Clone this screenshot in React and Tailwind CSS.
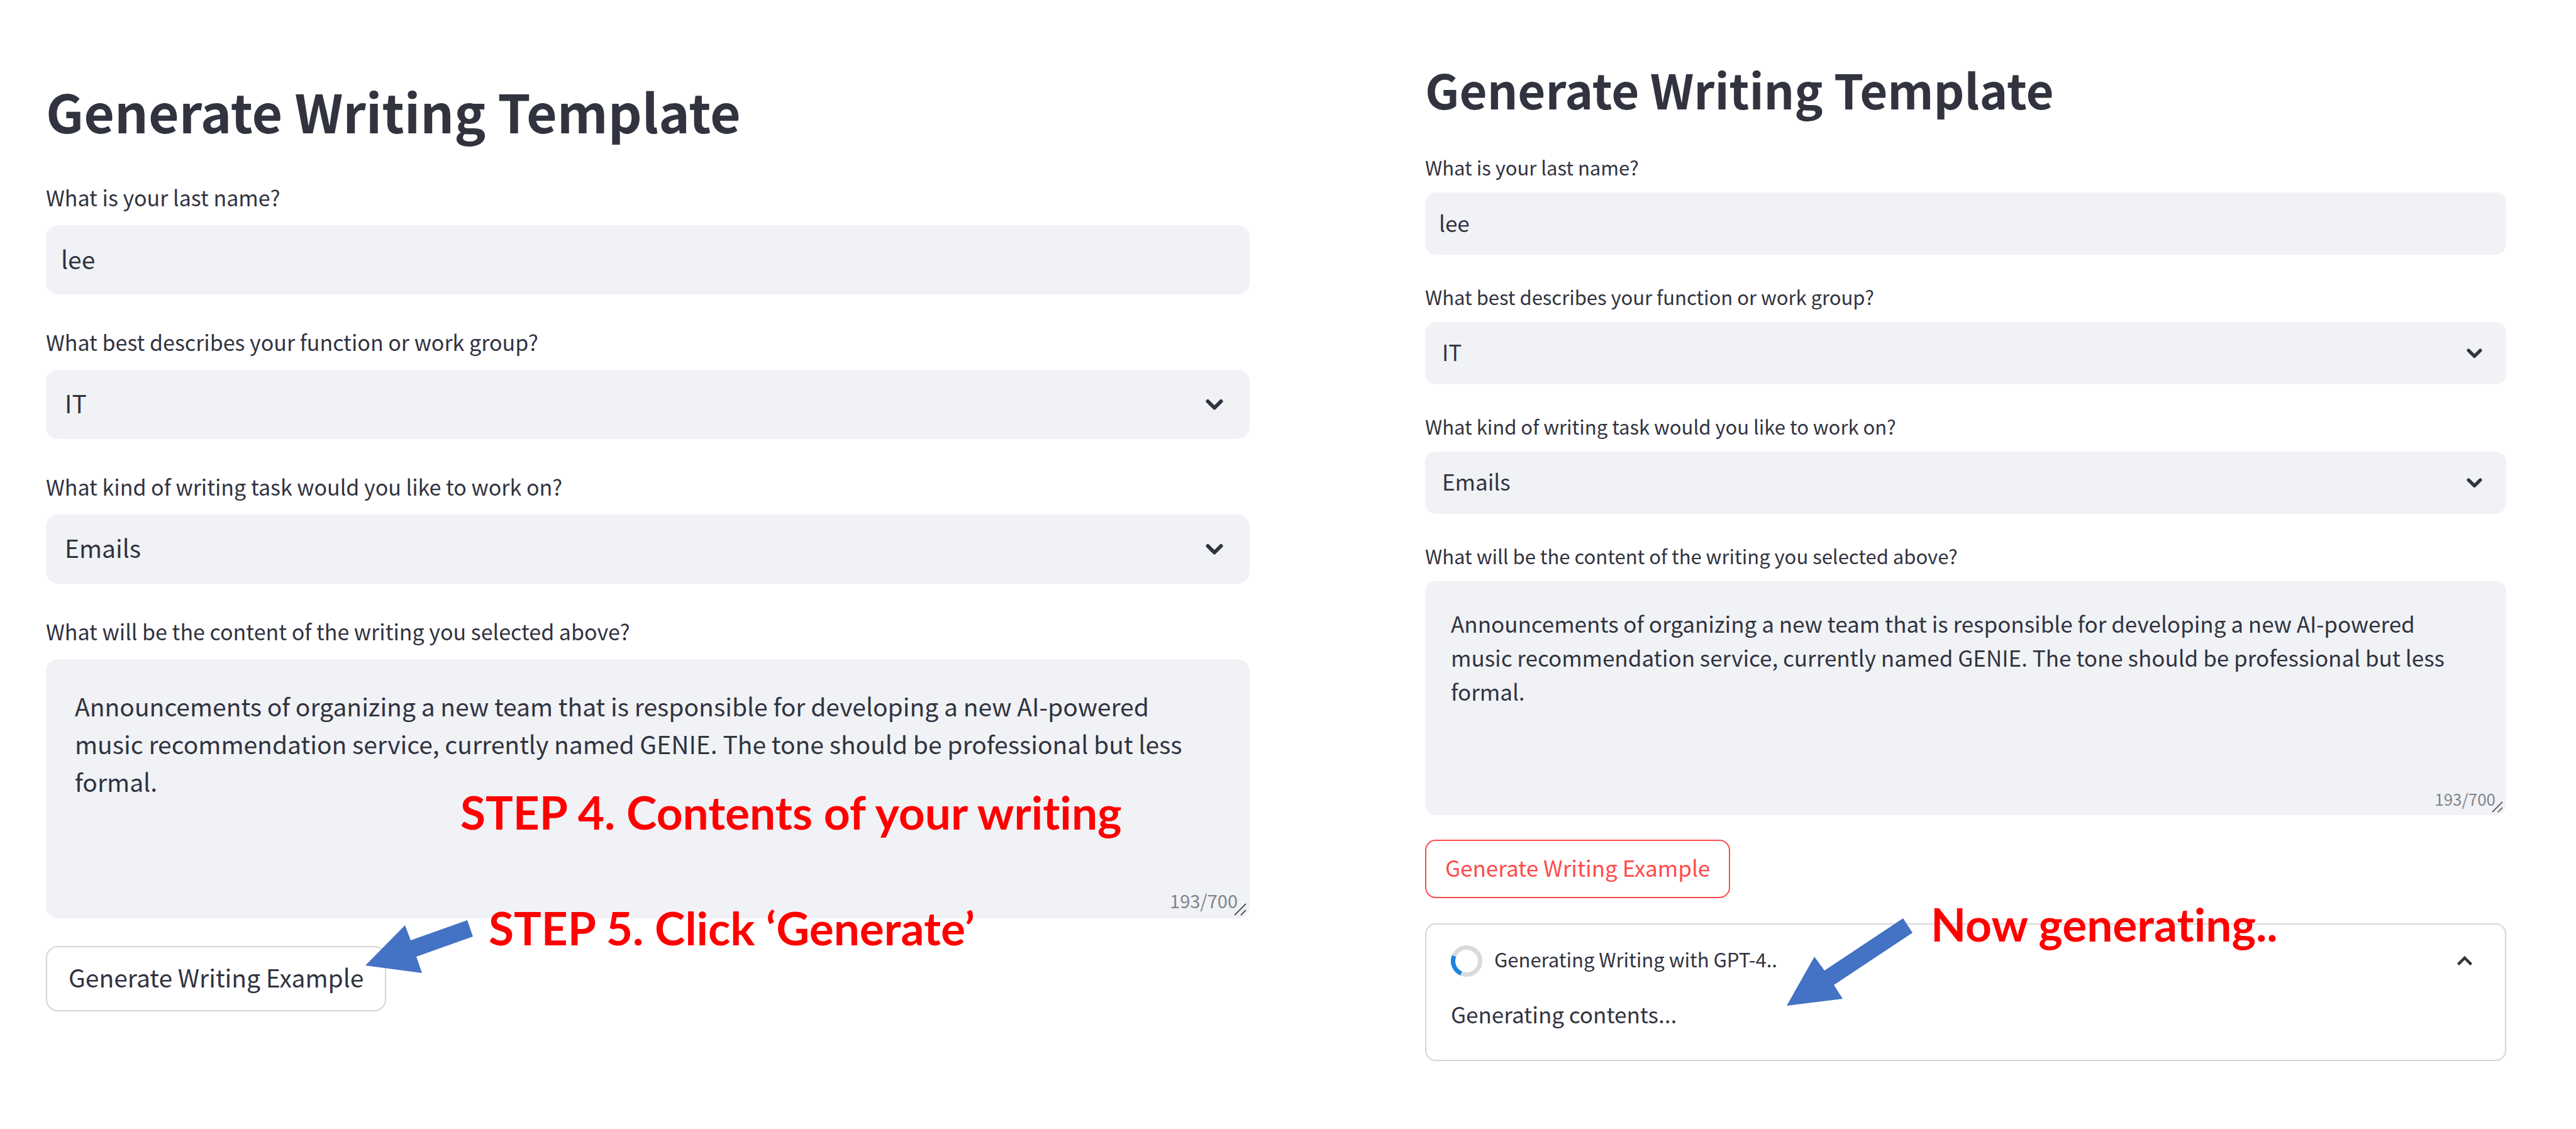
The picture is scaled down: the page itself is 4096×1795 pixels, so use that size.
import React, { useId } from "react";

const CONTENT =
  "Announcements of organizing a new team that is responsible for developing a new AI-powered music recommendation service, currently named GENIE. The tone should be professional but less formal.";

const large = {
  panel: "pt-[116px]",
  title: "text-[84px] leading-[120px] mb-[56px]",
  fields: "gap-[54px]",
  label: "text-[34px] leading-[44px] mb-[22px]",
  box: "h-[110px] pb-[5px] text-[39px] rounded-[19px]",
  input: "px-[24px]",
  select: "px-[30px]",
  chevron: "right-[42px] size-[28px]",
  textarea: "h-[412px] text-[39px] leading-[60px] rounded-[19px] pt-[44px] pl-[46px] pr-[64px]",
  counter: "text-[29px] right-[19px] bottom-[14px]",
  grip: "right-[5px] bottom-[4px] size-[20px]",
  button: "mt-[44px] h-[104px] px-[34px] pb-[6px] text-[39px] rounded-[19px] border-[#d6d6d9] text-[#31333f]",
};

const small = {
  panel: "pt-[87px]",
  title: "text-[76px] leading-[108px] mb-[51px]",
  fields: "gap-[47px]",
  label: "text-[31px] leading-[40px] mb-[20px]",
  box: "h-[99px] pb-[4px] text-[35px] rounded-[17px]",
  input: "px-[22px]",
  select: "px-[27px]",
  chevron: "right-[38px] size-[25px]",
  textarea: "h-[372px] text-[35px] leading-[54px] rounded-[17px] pt-[40px] pl-[41px] pr-[58px]",
  counter: "text-[26px] right-[17px] bottom-[13px]",
  grip: "right-[5px] bottom-[4px] size-[18px]",
  button: "mt-[39px] h-[93px] px-[30px] pb-[5px] text-[35px] rounded-[17px] border-[#ff4b4b] text-[#ff4b4b]",
};

function Field({ id, label, styles, children }) {
  return (
    <div className="flex flex-col">
      <label htmlFor={id} className={styles.label}>
        {label}
      </label>
      {children}
    </div>
  );
}

function SelectField({ label, value, options, styles }) {
  const id = useId();
  return (
    <Field id={id} label={label} styles={styles}>
      <div className="relative">
        <select
          id={id}
          defaultValue={value}
          className={`block w-full appearance-none bg-[#f0f2f6] outline-none ${styles.box} ${styles.select}`}
        >
          {options.map((o) => (
            <option key={o}>{o}</option>
          ))}
        </select>
        <svg
          viewBox="0 0 28 28"
          aria-hidden="true"
          className={`pointer-events-none absolute inset-y-0 my-auto ${styles.chevron}`}
        >
          <path
            d="M3.500 9L14 19.500L24.500 9"
            fill="none"
            stroke="#31333f"
            strokeWidth="6"
            strokeLinecap="round"
            strokeLinejoin="round"
          />
        </svg>
      </div>
    </Field>
  );
}

function WritingForm({ styles, children, notes }) {
  const nameId = useId();
  const contentId = useId();
  return (
    <section className={`relative min-w-0 ${styles.panel}`}>
      <h1 className={`font-bold whitespace-nowrap ${styles.title}`}>Generate Writing Template</h1>
      <div className={`flex flex-col ${styles.fields}`}>
        <Field id={nameId} label="What is your last name?" styles={styles}>
          <input
            id={nameId}
            type="text"
            defaultValue="lee"
            className={`block w-full bg-[#f0f2f6] outline-none ${styles.box} ${styles.input}`}
          />
        </Field>
        <SelectField
          label="What best describes your function or work group?"
          value="IT"
          options={["IT"]}
          styles={styles}
        />
        <SelectField
          label="What kind of writing task would you like to work on?"
          value="Emails"
          options={["Emails"]}
          styles={styles}
        />
        <Field
          id={contentId}
          label="What will be the content of the writing you selected above?"
          styles={styles}
        >
          <div className="relative">
            <textarea
              id={contentId}
              maxLength={700}
              defaultValue={CONTENT}
              className={`block w-full resize-none overflow-hidden bg-[#f0f2f6] outline-none ${styles.textarea}`}
            />
            <span className={`absolute leading-none text-[#83848c] ${styles.counter}`}>193/700</span>
            <svg viewBox="0 0 20 20" aria-hidden="true" className={`absolute ${styles.grip}`}>
              <path d="M1 19L19 1M11 19L19 11" stroke="#55565c" strokeWidth="2" fill="none" />
            </svg>
          </div>
        </Field>
      </div>
      <button type="button" className={`block border-2 bg-white whitespace-nowrap ${styles.button}`}>
        Generate Writing Example
      </button>
      {children}
      {notes}
    </section>
  );
}

function StatusPanel() {
  return (
    <div className="mt-[40px] rounded-[17px] border-2 border-[#d6d6d9] px-[39px] pt-[34px] pb-[46px]">
      <button
        type="button"
        aria-expanded="true"
        className="flex h-[48px] w-full items-center gap-[19px] text-left text-[31px]"
      >
        <svg viewBox="0 0 50 50" className="size-[50px]" aria-hidden="true">
          <circle cx="25" cy="25" r="21.500" fill="none" stroke="#d9dadc" strokeWidth="7" />
          <path
            d="M5.100 16.800A21.500 21.500 0 0 0 16.300 44.700"
            fill="none"
            stroke="#1c83e1"
            strokeWidth="7"
          />
        </svg>
        <span className="grow pb-[5px]">Generating Writing with GPT-4..</span>
        <svg viewBox="0 0 24 24" className="mr-[13px] size-[24px]" aria-hidden="true">
          <path d="M1.500 17.500L12 7L22.500 17.500" fill="none" stroke="#31333f" strokeWidth="4.500" />
        </svg>
      </button>
      <p className="mt-[33px] text-[35px] leading-[54px]">Generating contents...</p>
    </div>
  );
}

const noteText =
  "absolute whitespace-nowrap font-['Lato',sans-serif] text-[73px] leading-[90px] font-bold text-[#ff0000] [font-variant-ligatures:none]";

export default function App() {
  return (
    <main className="grid min-h-screen grid-cols-[1914fr_1719fr] items-start gap-[279px] bg-white pr-[111px] pl-[73px] font-['Noto_Sans_CJK_SC',sans-serif] text-[#31333f]">
      <WritingForm
        styles={large}
        notes={
          <>
            <p className={`${noteText} top-[1246px] left-[659px]`}>STEP 4. Contents of your writing</p>
            <p className={`${noteText} top-[1430px] left-[704px]`}>STEP 5. Click ‘Generate’</p>
            <svg
              viewBox="0 0 171 84"
              aria-hidden="true"
              className="absolute top-[1463px] left-[508px] h-[84px] w-[171px]"
            >
              <polygon points="0,72 63,8 72,32 162,0 171,26 81,58 90,84" fill="#4472c4" />
            </svg>
          </>
        }
      />
      <WritingForm
        styles={small}
        notes={
          <>
            <p className={`${noteText} top-[1424px] left-[804px]`}>Now generating..</p>
            <svg
              viewBox="0 0 200 140"
              aria-hidden="true"
              className="absolute top-[1460px] left-[575px] h-[140px] w-[200px]"
            >
              <polygon points="0,139 44,61 60,83 185,0 200,23 75,106 89,128" fill="#4472c4" />
            </svg>
          </>
        }
      >
        <StatusPanel />
      </WritingForm>
    </main>
  );
}
